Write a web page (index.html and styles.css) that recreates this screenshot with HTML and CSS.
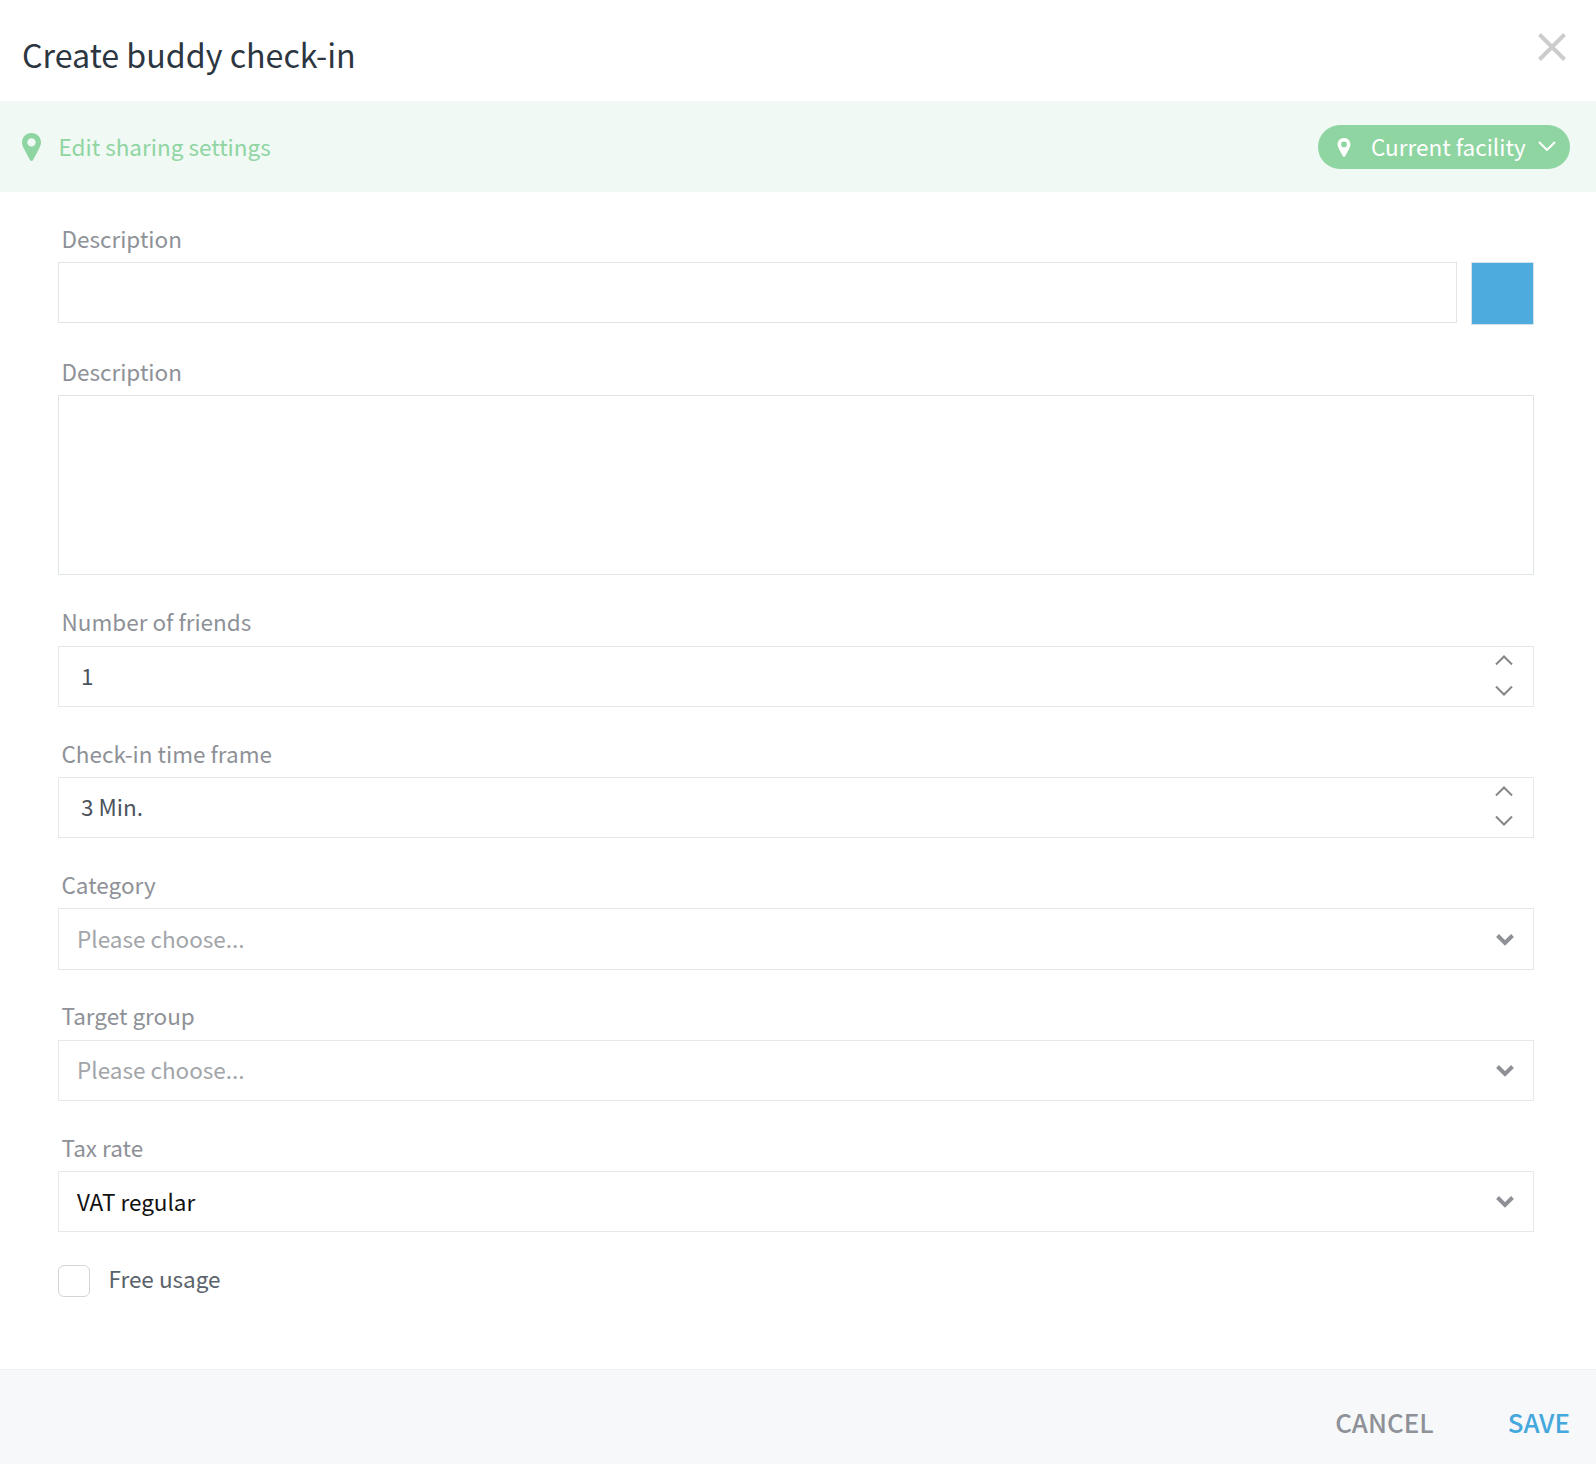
FILE: index.html
```html
<!DOCTYPE html>
<html lang="en">
<head>
  <meta charset="UTF-8" />
  <meta name="viewport" content="width=device-width, initial-scale=1.0"/>
  <title>Create buddy check-in</title>
  <link rel="stylesheet" href="styles.css">
</head>
<body>

  <div class="dialog">
    <div class="dialog-header">
      <h1>Create buddy check-in</h1>
      <svg class="close-icon" viewBox="0 0 28 28" width="28" height="28">
        <path d="M1.5 1.5L26.5 26.5M26.5 1.5L1.5 26.5" fill="none" stroke="#cccccc" stroke-width="4"/>
      </svg>
    </div>

    <div class="sharing-bar">
      <div class="sharing-link">
        <svg class="pin-icon" viewBox="0 0 19 28" width="19" height="28">
          <path fill-rule="evenodd" fill="#8fd5a2" d="M9.5 0C4.2 0 0 4.1 0 9.3c0 2.2.7 4 1.7 6l6.2 11.7c.7 1.3 2.5 1.3 3.2 0l6.200-11.700c1-2 1.700-3.800 1.700-6C19 4.100 14.800 0 9.500 0zm0 5.200a4.200 4.200 0 1 1 0 8.400a4.200 4.200 0 0 1 0-8.400z"/>
        </svg>
        <span>Edit sharing settings</span>
      </div>
      <div class="scope-pill">
        <svg class="pill-pin" viewBox="0 0 19 28" width="14" height="19">
          <path fill-rule="evenodd" fill="#ffffff" d="M9.5 0C4.2 0 0 4.1 0 9.3c0 2.2.7 4 1.7 6l6.2 11.7c.7 1.3 2.5 1.3 3.2 0l6.200-11.700c1-2 1.700-3.800 1.700-6C19 4.100 14.800 0 9.500 0zm0 5.200a4.200 4.200 0 1 1 0 8.400a4.200 4.200 0 0 1 0-8.400z"/>
        </svg>
        <span>Current facility</span>
        <svg class="pill-chevron" viewBox="0 0 18 10" width="18" height="10">
          <path d="M1 1L9 9L17 1" fill="none" stroke="#ffffff" stroke-width="2"/>
        </svg>
      </div>
    </div>

    <form class="dialog-body">
      <div class="field">
        <label>Description</label>
        <div class="name-row">
          <div class="box name-box"></div>
          <div class="color-swatch"></div>
        </div>
      </div>

      <div class="field">
        <label>Description</label>
        <div class="box text-box"></div>
      </div>

      <div class="field field-number">
        <label>Number of friends</label>
        <div class="box spin-box">
          <span class="value">1</span>
          <div class="spinner spinner-wide">
            <svg viewBox="0 0 18 10" width="18" height="10"><path d="M1 9.500L9 1.500L17 9.500" fill="none" stroke="#858585" stroke-width="2"/></svg>
            <svg viewBox="0 0 18 10" width="18" height="10"><path d="M1 .5L9 8.500L17 .5" fill="none" stroke="#858585" stroke-width="2"/></svg>
          </div>
        </div>
      </div>

      <div class="field">
        <label>Check-in time frame</label>
        <div class="box spin-box">
          <span class="value">3 Min.</span>
          <div class="spinner">
            <svg viewBox="0 0 18 10" width="18" height="10"><path d="M1 9.500L9 1.500L17 9.500" fill="none" stroke="#858585" stroke-width="2"/></svg>
            <svg viewBox="0 0 18 10" width="18" height="10"><path d="M1 .5L9 8.500L17 .5" fill="none" stroke="#858585" stroke-width="2"/></svg>
          </div>
        </div>
      </div>

      <div class="field">
        <label>Category</label>
        <div class="box select-box select-first">
          <span class="placeholder">Please choose...</span>
          <svg class="select-chevron" viewBox="0 0 18 12" width="18" height="12"><path d="M1.500 1.500L9 9L16.500 1.500" fill="none" stroke="#8e9095" stroke-width="4"/></svg>
        </div>
      </div>

      <div class="field field-target">
        <label>Target group</label>
        <div class="box select-box">
          <span class="placeholder">Please choose...</span>
          <svg class="select-chevron" viewBox="0 0 18 12" width="18" height="12"><path d="M1.500 1.500L9 9L16.500 1.500" fill="none" stroke="#8e9095" stroke-width="4"/></svg>
        </div>
      </div>

      <div class="field">
        <label>Tax rate</label>
        <div class="box select-box">
          <span class="selected">VAT regular</span>
          <svg class="select-chevron" viewBox="0 0 18 12" width="18" height="12"><path d="M1.500 1.500L9 9L16.500 1.500" fill="none" stroke="#8e9095" stroke-width="4"/></svg>
        </div>
      </div>

      <div class="check-row">
        <span class="check-box"></span>
        <span class="check-label">Free usage</span>
      </div>
    </form>

    <div class="dialog-footer">
      <span class="btn-cancel">CANCEL</span>
      <span class="btn-save">SAVE</span>
    </div>
  </div>

</body>
</html>
```

FILE: styles.css
```css
body {
  margin: 0;
  background: #fff;
  font-family: "Noto Sans CJK SC", "Noto Sans", sans-serif;
  font-size: 22.5px;
}

.dialog {
  display: flex;
  flex-direction: column;
  height: 1464px;
  overflow: hidden;
}

.dialog-header {
  height: 101px;
  padding: 31px 30px 0 22px;
  box-sizing: border-box;
  display: flex;
  justify-content: space-between;
  align-items: flex-start;
}

.dialog-header h1 {
  margin: 0;
  font-size: 32.2px;
  font-weight: 400;
  line-height: 46px;
  color: #2b3640;
}

.close-icon {
  flex-shrink: 0;
  margin-top: 2px;
}

.sharing-bar {
  height: 91px;
  background: #f0f9f4;
  padding: 0 26px 0 22px;
  display: flex;
  justify-content: space-between;
  align-items: center;
}

.sharing-link {
  display: flex;
  align-items: center;
  gap: 17.5px;
  color: #8fd5a2;
  line-height: 34px;
}

.sharing-link span {
  padding-bottom: 2px;
}

.scope-pill {
  height: 44px;
  width: 252px;
  box-sizing: border-box;
  margin-top: 1px;
  padding: 0 14px 0 19px;
  border-radius: 22px;
  background: #8fd5a2;
  color: #fff;
  display: flex;
  align-items: center;
  line-height: 40px;
  white-space: nowrap;
}

.scope-pill span {
  margin-left: 20px;
  padding-bottom: 2px;
}

.pill-chevron {
  margin-left: auto;
  margin-bottom: 2px;
}

.dialog-body {
  flex: 1;
  padding: 0 62px 0 58px;
}

.field {
  margin-top: 30px;
}

.field label {
  display: block;
  margin-bottom: 8px;
  padding-left: 3.5px;
  line-height: 32px;
  color: #8e9197;
}

.field-number label {
  margin-bottom: 9px;
}

.field-target {
  margin-top: 29px;
}

.field-target label {
  margin-bottom: 9px;
}

.box {
  box-sizing: border-box;
  height: 61px;
  border: 1px solid #e6e8e9;
  display: flex;
  align-items: center;
  justify-content: space-between;
}

.name-row {
  display: flex;
  align-items: flex-start;
  gap: 14px;
}

.name-box {
  flex: 1;
  border-color: #dfe5e7;
}

.color-swatch {
  width: 63px;
  height: 63px;
  box-sizing: border-box;
  border: 1px solid #d5e2ea;
  background: #4dabdd;
}

.text-box {
  height: 180px;
  border-color: #dfe5e7;
}

.select-first {
  height: 62px;
}

.value {
  padding-left: 22px;
  padding-bottom: 3px;
  color: #4b535c;
}

.spinner {
  display: flex;
  flex-direction: column;
  gap: 20px;
  padding-right: 20px;
  padding-bottom: 3px;
}

.spinner-wide {
  gap: 21px;
}

.spinner svg {
  display: block;
}

.placeholder {
  padding-left: 18px;
  padding-bottom: 3px;
  color: #a2a5a9;
}

.selected {
  padding-left: 18px;
  padding-bottom: 2px;
  color: #111;
}

.select-chevron {
  margin-right: 19px;
  margin-top: 1px;
}

.check-row {
  display: flex;
  align-items: flex-start;
  gap: 18.5px;
  margin-top: 33px;
  color: #5a626b;
}

.check-label {
  line-height: 27px;
}

.check-box {
  width: 32px;
  height: 32px;
  box-sizing: border-box;
  border: 1px solid #d3d5d7;
  border-radius: 6px;
}

.dialog-footer {
  height: 95px;
  box-sizing: border-box;
  border-top: 1px solid #eff1f3;
  background: #f6f8fa;
  padding: 34px 26px 0 0;
  display: flex;
  justify-content: flex-end;
  gap: 74px;
  font-size: 25.9px;
  font-weight: 500;
  line-height: 36px;
}

.btn-cancel {
  color: #8e9197;
}

.btn-save {
  color: #45a8dd;
}
```
